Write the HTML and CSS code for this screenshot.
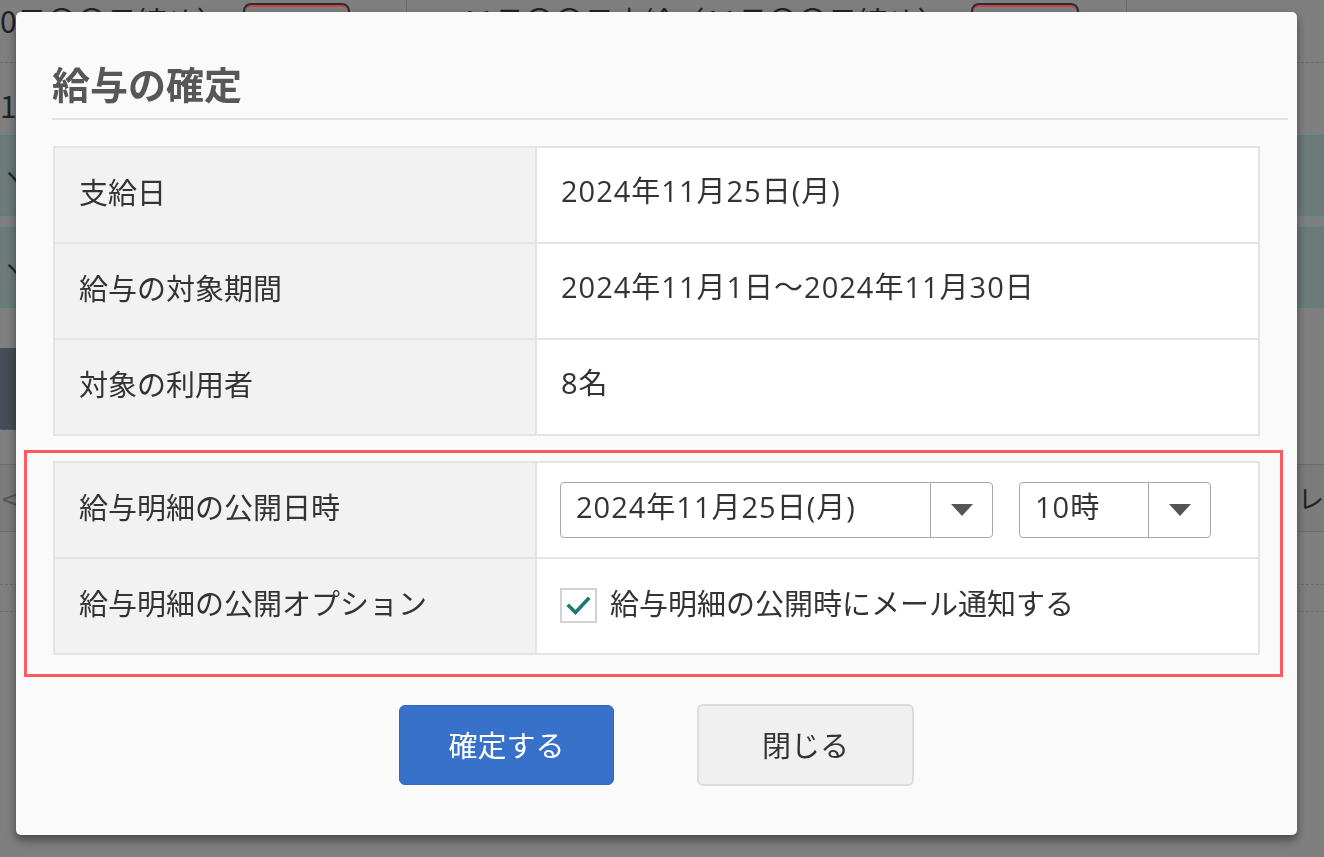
FILE: index.html
```html
<!DOCTYPE html>
<html lang="ja">
<head>
<meta charset="utf-8">
<title>給与の確定</title>
<link rel="stylesheet" href="styles.css">
</head>
<body>
<div class="page">
  <div class="bg-head">
    <span class="bg-text t1">0日〇〇日締め）</span>
    <span class="bg-box b1"></span>
    <span class="bg-divider d1"></span>
    <span class="bg-text t2">11月〇〇日支給（11月〇〇日締め）</span>
    <span class="bg-box b2"></span>
    <span class="bg-divider d2"></span>
  </div>
  <div class="bg-row r2"><span class="bg-text">1:</span></div>
  <div class="bg-row teal"><span class="bg-mark">ヽ</span></div>
  <div class="bg-row gap12"></div>
  <div class="bg-row teal"><span class="bg-mark">ヽ</span></div>
  <div class="bg-row gap40"></div>
  <div class="bg-row dark-row"><span class="dark-block"></span></div>
  <div class="bg-row gap34"></div>
  <div class="bg-row band"><span class="bg-text lt">&lt;</span><span class="bg-text re">レ</span></div>
  <div class="bg-row gap53"></div>
  <div class="bg-row gap27"></div>
  <div class="bg-row rest"></div>
</div>

<div class="overlay">
  <div class="modal">
    <h2 class="modal-title">給与の確定</h2>

    <div class="info">
      <div class="cell label">支給日</div>
      <div class="cell value spaced">2024年11月25日(月)</div>
      <div class="cell label">給与の対象期間</div>
      <div class="cell value spaced">2024年11月1日～2024年11月30日</div>
      <div class="cell label last">対象の利用者</div>
      <div class="cell value spaced last">8名</div>
    </div>

    <div class="highlight">
      <div class="info">
        <div class="cell label">給与明細の公開日時</div>
        <div class="cell value">
          <div class="select sel-date">
            <span class="sel-val">2024年11月25日(月)</span>
            <span class="sel-arrow"><span class="tri"></span></span>
          </div>
          <div class="select sel-hour">
            <span class="sel-val">10時</span>
            <span class="sel-arrow"><span class="tri"></span></span>
          </div>
        </div>
        <div class="cell label last">給与明細の公開オプション</div>
        <div class="cell value last">
          <span class="checkbox">
            <svg width="33" height="31" viewBox="0 0 33 31"><polyline points="7,16 13.5,22.5 26,9" fill="none" stroke="#1f7a6d" stroke-width="3.6" stroke-linecap="square"/></svg>
          </span>
          <span class="check-label">給与明細の公開時にメール通知する</span>
        </div>
      </div>
    </div>

    <div class="sep"></div>

    <div class="actions">
      <button class="btn btn-primary">確定する</button>
      <button class="btn btn-default">閉じる</button>
    </div>
  </div>
</div>
</body>
</html>
```

FILE: styles.css
```css
html, body {
  margin: 0;
  padding: 0;
  width: 1324px;
  height: 857px;
  overflow: hidden;
}

body {
  font-family: "Open Sans", "Noto Sans CJK JP", sans-serif;
  background: #7f7f7f;
  color: #333;
}

/* ---------- dimmed background page ---------- */
.page {
  width: 1324px;
  height: 857px;
  display: flex;
  flex-direction: column;
  color: #1f1f1f;
}

.bg-head {
  height: 62px;
  display: flex;
  align-items: flex-start;
  border-bottom: 1px dashed #6a6a6a;
  flex-shrink: 0;
}

.bg-text {
  font-family: "Noto Sans CJK JP", sans-serif;
  font-size: 30px;
  line-height: 40px;
  color: #222;
}

.t1 {
  width: 243px;
  flex-shrink: 0;
}

.t2 {
  margin-left: 54px;
  width: 510px;
  flex-shrink: 0;
}

.bg-box {
  margin-top: 3px;
  height: 40px;
  border: 2px solid #2c2c2c;
  border-radius: 8px;
  box-shadow: inset 0 2px 0 #c0454b;
  flex-shrink: 0;
}

.b1 { width: 103px; }
.b2 { width: 104px; }

.bg-divider {
  align-self: stretch;
  width: 1px;
  background: #6b6b6b;
  flex-shrink: 0;
}

.d1 { margin-left: 56px; }
.d2 { margin-left: 47px; }

.bg-row {
  flex-shrink: 0;
  display: flex;
  align-items: center;
}

.r2 {
  height: 72px;
}

.r2 .bg-text {
  margin-top: 12px;
}

.teal {
  height: 79px;
  background: #6d7a7a;
  border-top: 1px dashed #3d8c80;
  border-bottom: 1px dashed #3d8c80;
}

.bg-mark {
  font-family: "Noto Sans CJK JP", sans-serif;
  font-size: 26px;
  color: #1e2b2b;
}

.gap12 { height: 11px; }
.gap40 { height: 40px; }
.gap34 { height: 34px; }

.dark-row {
  height: 82px;
  align-items: stretch;
}

.dark-block {
  width: 300px;
  background: #464c55;
  border-bottom: 1px dashed #4b5b8a;
}

.band {
  height: 66px;
  justify-content: space-between;
  background: #7b7b7b;
  border-top: 1px solid #6d6d6d;
  border-bottom: 1px solid #6d6d6d;
}

.band .lt {
  margin-left: 2px;
  color: #555;
  font-size: 28px;
}

.band .re {
  margin-right: 0;
  color: #222;
  font-size: 26px;
}

.gap53 {
  height: 52px;
  border-bottom: 1px dashed #6c6c6c;
}

.gap27 {
  height: 26px;
  border-bottom: 1px dashed #6c6c6c;
}

.rest {
  flex: 1;
}

/* ---------- modal ---------- */
.overlay {
  position: fixed;
  left: 0;
  top: 0;
  width: 1324px;
  height: 857px;
  box-sizing: border-box;
  padding: 12px 27px 22px 16px;
  display: flex;
}

.modal {
  flex: 1;
  box-sizing: border-box;
  background: #fafafa;
  border-radius: 5px;
  box-shadow: 0 5px 10px rgba(0, 0, 0, 0.45);
  padding: 49px 9px 49px 36px;
  display: flex;
  flex-direction: column;
}

.modal-title {
  margin: 0;
  font-family: "Noto Sans CJK JP", sans-serif;
  font-size: 38px;
  line-height: 44px;
  font-weight: bold;
  color: #575757;
  padding-bottom: 13px;
  border-bottom: 2px solid #e3e3e3;
}

.info {
  display: grid;
  grid-template-columns: 482px 1fr;
  border: 2px solid #e4e4e4;
  border-bottom: none;
  margin-top: 26px;
  margin-right: 28px;
  margin-left: 1px;
}

.cell {
  height: 96px;
  box-sizing: border-box;
  padding-bottom: 8px;
  border-bottom: 2px solid #e4e4e4;
  display: flex;
  align-items: center;
  font-size: 29px;
  line-height: 40px;
  color: #333;
}

.label {
  background: #f2f2f2;
  border-right: 2px solid #e4e4e4;
  padding-left: 24px;
  font-family: "Noto Sans CJK JP", sans-serif;
}

.value {
  background: #fff;
  padding-left: 24px;
}

.spaced {
  letter-spacing: 1px;
}

.highlight {
  margin: 14px 5px 0 -28px;
  border: 3px solid #ff5a5f;
  padding: 8px 20px 19px 26px;
}

.highlight .info {
  margin: 0;
}

.highlight .value {
  padding-left: 23px;
}

.select {
  display: flex;
  height: 54px;
  margin-top: 8px;
  border: 1px solid #a8a8a8;
  border-radius: 4px;
  background: #fff;
  box-sizing: content-box;
}

.sel-date {
  width: 431px;
}

.sel-hour {
  width: 190px;
  margin-left: 26px;
}

.sel-val {
  flex: 1;
  display: flex;
  align-items: center;
  padding-left: 15px;
  padding-bottom: 6px;
  font-size: 29px;
  line-height: 40px;
  letter-spacing: 1px;
  color: #333;
}

.sel-arrow {
  width: 61px;
  border-left: 1px solid #a8a8a8;
  display: flex;
  align-items: center;
  justify-content: center;
}

.tri {
  width: 0;
  height: 0;
  border-left: 11px solid transparent;
  border-right: 11px solid transparent;
  border-top: 12px solid #555;
}

.checkbox {
  width: 33px;
  height: 31px;
  border: 2px solid #d2d2d2;
  background: #fff;
  display: flex;
  margin-top: 6px;
}

.check-label {
  margin-left: 13px;
  font-family: "Noto Sans CJK JP", sans-serif;
}

.sep {
  margin-top: 4px;
  height: 2px;
  background: #e3e3e3;
}

.actions {
  margin-top: 23px;
  margin-right: 27px;
  display: flex;
  justify-content: center;
  align-items: center;
  gap: 83px;
}

.btn {
  font-family: "Noto Sans CJK JP", sans-serif;
  font-size: 29px;
  border-radius: 6px;
  cursor: pointer;
  box-sizing: border-box;
  padding: 0 0 3px 0;
}

.btn-primary {
  width: 215px;
  height: 80px;
  background: #3871c9;
  border: 1px solid #3468b8;
  color: #fff;
}

.btn-default {
  width: 217px;
  height: 82px;
  background: #f0f0f0;
  border: 2px solid #dcdcdc;
  color: #333;
}
```
